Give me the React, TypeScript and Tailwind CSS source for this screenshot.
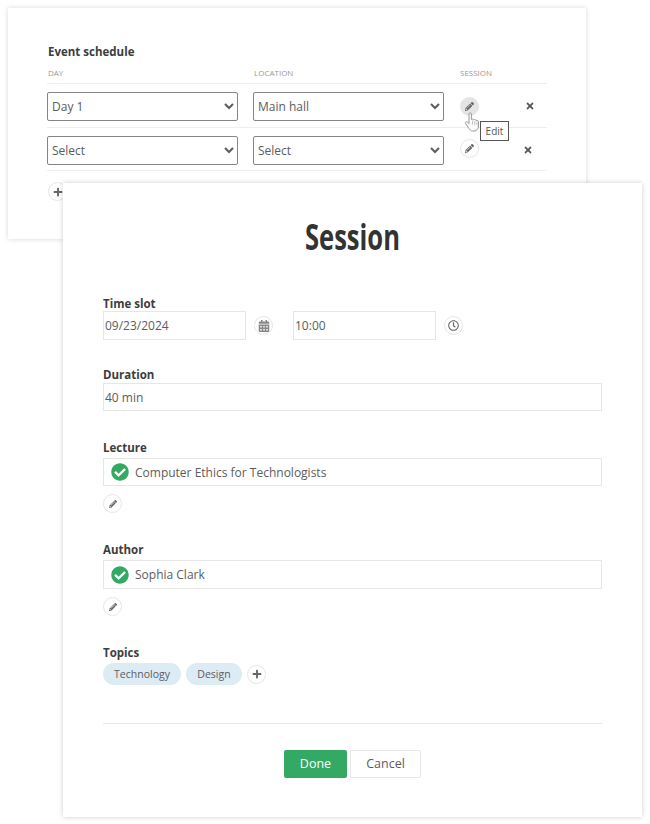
import { FaCalendarAlt, FaCheckCircle, FaPencilAlt, FaPlus, FaRegClock, FaTimes } from "react-icons/fa";
import type { ReactNode } from "react";

function RoundBtn({ children, active = false }: { children: ReactNode; active?: boolean }) {
  return (
    <div
      className={`flex h-[19px] w-[19px] shrink-0 items-center justify-center rounded-full border text-[#666] ${
        active ? "border-[#e4e4e4] bg-[#e4e4e4] text-[#333]" : "border-[#e6e6e6] bg-white"
      }`}
    >
      {children}
    </div>
  );
}

function ScheduleRow({
  day,
  place,
  active = false,
  rowClass,
  pencilClass,
  closeClass,
}: {
  day: string;
  place: string;
  active?: boolean;
  rowClass: string;
  pencilClass: string;
  closeClass: string;
}) {
  return (
    <div className={`flex items-center border-b border-[#eeeeee] ${rowClass}`}>
      <select
        defaultValue={day}
        className="h-[29px] w-[191px] rounded-[2px] border border-[#858585] bg-white text-[12px] text-[#5c5c5c]"
      >
        <option>{day}</option>
      </select>
      <select
        defaultValue={place}
        className="ml-[15px] h-[29px] w-[191px] rounded-[2px] border border-[#858585] bg-white text-[12px] text-[#5c5c5c]"
      >
        <option>{place}</option>
      </select>
      <div className={`ml-[16px] ${pencilClass}`}>
        <RoundBtn active={active}>
          <FaPencilAlt size={9} />
        </RoundBtn>
      </div>
      <FaTimes size={10} className={`text-[#555] ${closeClass}`} />
    </div>
  );
}

function Field({ label, children, className = "" }: { label: string; children: ReactNode; className?: string }) {
  return (
    <div className={className}>
      <div className="h-[16px] text-[11.5px] leading-[17px] font-bold text-[#3d3d3d]">{label}</div>
      {children}
    </div>
  );
}

function Verified({ text, height }: { text: string; height: string }) {
  return (
    <>
      <div className={`mt-[3px] flex items-center border border-[#e6e6e6] pl-[7px] text-[12px] text-[#5c5c5c] ${height}`}>
        <FaCheckCircle size={18} className="text-[#34a963]" />
        <span className="ml-[6px] pt-[1px]">{text}</span>
      </div>
      <div className="mt-[8px]">
        <RoundBtn>
          <FaPencilAlt size={8} />
        </RoundBtn>
      </div>
    </>
  );
}

export default function App() {
  return (
    <div className="relative h-[824px] w-[650px] overflow-hidden bg-white pt-[8px] pl-[8px] font-['Open_Sans',sans-serif]">
      {/* Schedule card behind */}
      <div className="h-[231px] w-[578px] bg-white px-[39px] pt-[37px] shadow-[0_0_5px_rgba(0,0,0,0.16)]">
        <div className="h-[14px] pl-[1px] text-[11.5px] leading-[14px] font-bold text-[#3d3d3d]">Event schedule</div>
        <div className="mt-[8px] flex h-[17px] border-b border-[#eeeeee] pl-[1px] text-[8px] text-[#999] uppercase">
          <span className="w-[206px]">Day</span>
          <span className="w-[206px]">Location</span>
          <span>Session</span>
        </div>
        <ScheduleRow
          day="Day 1"
          place="Main hall"
          active
          rowClass="h-[44px] pt-[1px]"
          pencilClass="mt-0"
          closeClass="ml-[46px]"
        />
        <ScheduleRow
          day="Select"
          place="Select"
          rowClass="h-[43px] pt-[2px]"
          pencilClass="mb-[3px]"
          closeClass="ml-[44px]"
        />
        <div className="mt-[11px] pl-[1px]">
          <RoundBtn>
            <FaPlus size={10} />
          </RoundBtn>
        </div>
      </div>

      {/* Hand cursor and tooltip over the edit button */}
      <svg className="absolute top-[112px] left-[464px]" width="19" height="20" viewBox="0 0 19 20">
        <path
          d="M5 2c0-1.500 2.400-1.500 2.400 0v5.500c.8-.8 2-.6 2.300.4.900-.7 2.200-.3 2.400.6 1.100-.5 2.400.2 2.400 1.400v4.100c0 2.500-1.800 5-4.300 5H8.500c-1.600 0-2.600-.9-3.400-2.200L1.600 11.500c-.9-1.500.9-2.600 2-1.400L5 11.700z"
          fill="#fbfbfb"
          stroke="#9a9a9a"
          strokeWidth="1"
        />
        <path d="M8.500 8.500v4M10.800 9v4M13 9.500v4" stroke="#c4c4c4" strokeWidth="1" fill="none" />
      </svg>
      <div className="absolute top-[121px] left-[480px] flex h-[20px] w-[29px] items-center justify-center border border-[#555] bg-white text-[10px] text-[#555]">
        Edit
      </div>

      {/* Session dialog in front */}
      <div className="absolute top-[183px] left-[63px] h-[634px] w-[579px] bg-white px-[40px] shadow-[0_0_5px_rgba(0,0,0,0.2)]">
        <h1 className="mt-[32px] h-[44px] origin-center scale-x-[0.73] text-center text-[35px] leading-[44px] font-bold text-[#333]">
          Session
        </h1>

        <Field label="Time slot" className="mt-[36px]">
          <div className="flex items-center">
            <div className="flex h-[29px] w-[143px] items-center border border-[#e6e6e6] pt-[1px] pl-[1px] text-[12px] text-[#5c5c5c]">
              09/23/2024
            </div>
            <div className="ml-[8px]">
              <RoundBtn>
                <FaCalendarAlt size={12} className="text-[#888]" />
              </RoundBtn>
            </div>
            <div className="ml-[20px] flex h-[29px] w-[143px] items-center border border-[#e6e6e6] pt-[1px] pl-[1px] text-[12px] text-[#5c5c5c]">
              10:00
            </div>
            <div className="ml-[8px]">
              <RoundBtn>
                <FaRegClock size={11} />
              </RoundBtn>
            </div>
          </div>
        </Field>

        <Field label="Duration" className="mt-[26px]">
          <div className="mt-[1px] flex h-[28px] items-center border border-[#e6e6e6] pt-[1px] pl-[1px] text-[12px] text-[#5c5c5c]">
            40 min
          </div>
        </Field>

        <Field label="Lecture" className="mt-[28px]">
          <Verified text="Computer Ethics for Technologists" height="h-[28px]" />
        </Field>

        <Field label="Author" className="mt-[28px]">
          <Verified text="Sophia Clark" height="h-[29px]" />
        </Field>

        <Field label="Topics" className="mt-[28px]">
          <div className="mt-[3px] flex items-center">
            <span className="flex h-[22px] w-[78px] items-center justify-center rounded-full bg-[#dcebf4] pt-[1px] text-[10.5px] text-[#5c5c5c]">
              Technology
            </span>
            <span className="ml-[5px] flex h-[22px] w-[56px] items-center justify-center rounded-full bg-[#dcebf4] pt-[1px] text-[10.5px] text-[#5c5c5c]">
              Design
            </span>
            <div className="ml-[5px]">
              <RoundBtn>
                <FaPlus size={10} />
              </RoundBtn>
            </div>
          </div>
        </Field>

        <div className="mt-[38px] border-t border-[#e6e6e6]" />

        <div className="mt-[26px] flex justify-center gap-[3px]">
          <button className="h-[28px] w-[63px] rounded-[2px] bg-[#34a963] text-[12.5px] font-medium text-white">Done</button>
          <button className="h-[28px] w-[71px] rounded-[2px] border border-[#e6e6e6] bg-white text-[12.5px] text-[#5c5c5c]">
            Cancel
          </button>
        </div>
      </div>
    </div>
  );
}
